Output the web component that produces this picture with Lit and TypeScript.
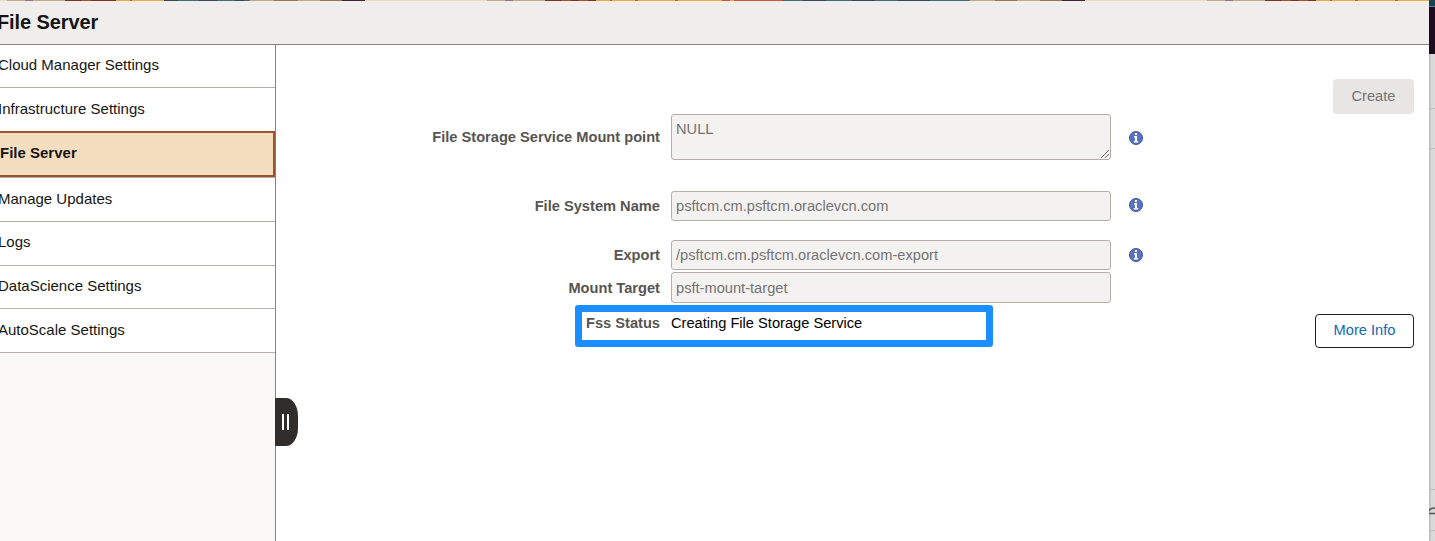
import { LitElement, html, css, svg } from "lit";
import { customElement, property } from "lit/decorators.js";

@customElement("info-icon")
class InfoIcon extends LitElement {
  static styles = css`
    :host { display: block; width: 14px; height: 14px; }
    svg { display: block; }
  `;
  render() {
    return html`<svg width="14" height="14" viewBox="0 0 14 14">
      ${svg`<circle cx="7" cy="7" r="6.5" fill="#5b72c0" stroke="#3c55a0" stroke-width="1"/>
      <path d="M6 2h2v2H6zM5 5h3v5h1.200v1.500H4.800V10H6V6.400H5z" fill="#fff"/>`}
    </svg>`;
  }
}

@customElement("nav-list")
class NavList extends LitElement {
  @property({ type: Array }) items: string[] = [];
  @property() current = "";
  static styles = css`
    :host { display: block; }
    .item {
      box-sizing: border-box; height: 44px; border-bottom: 1px solid #b5afa8;
      background: #fff; line-height: 42px; color: #161513; white-space: nowrap;
    }
    .item:nth-child(1), .item:nth-child(6) { height: 43px; line-height: 40px; }
    .item:nth-child(5) { line-height: 40px; }
    .label { display: block; margin-left: -2px; }
    .item.current {
      height: 46px; margin-top: -1px; border: 2px solid #9c522f; border-left: 0;
      background: #f5debf; font-weight: bold; line-height: 40px;
      box-shadow: 0 1px 0 #b5afa8; margin-bottom: 1px;
    }
    .current .label { margin-left: 0; }
  `;
  render() {
    return this.items.map(
      (t) => html`<div class="item ${t === this.current ? "current" : ""}"><span class="label">${t}</span></div>`
    );
  }
}

@customElement("app-root")
class AppRoot extends LitElement {
  static styles = css`
    :host {
      display: flex; width: 1435px; height: 541px; overflow: hidden; background: #fff;
      font-family: "Liberation Sans", Arial, sans-serif; font-size: 15px; color: #161513;
    }
    .modal { width: 1429px; display: flex; flex-direction: column; flex: none; }
    .banner {
      height: 1px; flex: none;
      background: repeating-linear-gradient(90deg,
        #e9ddbb 0 7px, #c6a780 7px 25px, #8c7c80 25px 33px, #c6a780 33px 65px,
        #7f3322 65px 81px, #a34c28 81px 91px, #7f3322 91px 99px, #a34c28 99px 108px, #7f3322 108px 116px,
        #f3ab41 116px 130px, #b8622c 130px 132px, #f3ab41 132px 155px, #b8622c 155px 158px, #f3ab41 158px 195px,
        #b8622c 195px 198px, #f3ab41 198px 242px, #d94f3c 242px 250px, #f3ab41 250px 254px, #d94f3c 254px 303px,
        #3f6b75 303px 323px, #364a58 323px 346px, #3f6b75 346px 372px, #364a58 372px 395px, #3f6b75 395px 418px,
        #364a58 418px 450px, #3f6b75 450px 490px, #c6a780 490px 515px, #9b7650 515px 537px, #c6a780 537px 560px,
        #9b7650 560px 582px, #442531 582px 605px, #e9ddbb 605px 720px);
    }
    .banner.start {
      width: 480px;
      background: linear-gradient(90deg,
        #e9ddbb 0 7px, #c6a780 7px 25px, #8c7c80 25px 33px, #c6a780 33px 65px,
        #7f3322 65px 81px, #a34c28 81px 91px, #7f3322 91px 116px, #f3ab41 116px 130px, #b8622c 130px 132px,
        #f3ab41 132px 164px, #364a58 164px 178px, #3f6b75 178px 199px, #364a58 199px 217px, #3f6b75 217px 235px,
        #364a58 235px 244px, #3f6b75 244px 250px, #c6a780 250px 274px, #9b7650 274px 298px, #c6a780 298px 320px,
        #9b7650 320px 342px, #442531 342px 365px, #e9ddbb 365px 480px);
    }
    .strip { display: flex; height: 1px; flex: none; }
    .strip .rest { flex: 1; }
    .title {
      box-sizing: border-box; height: 44px; flex: none; background: #f0eeec; border-bottom: 1px solid #858280;
      font-size: 20px; font-weight: bold; line-height: 42px; white-space: nowrap;
    }
    .title span { display: block; margin-left: -3px; letter-spacing: -0.1px; }
    .body { display: flex; flex: 1; min-height: 0; }
    .side { box-sizing: border-box; width: 276px; flex: none; background: #faf9f7; border-right: 1px solid #858280; position: relative; }
    .grip {
      position: absolute; left: 275px; top: 353px; width: 23px; height: 48px; z-index: 1; box-sizing: border-box;
      border-radius: 0 12px 12px 0 / 0 18px 18px 0; background: #312d2a;
      display: flex; align-items: center; gap: 3px; padding-left: 7px;
    }
    .grip i { width: 2px; height: 16px; background: #fff; }
    .main { flex: 1; display: flex; background: #fff; position: relative; }
    .form { width: 867px; flex: none; padding-top: 69px; font-size: 14.65px; }
    .row { display: grid; grid-template-columns: 384px 451px 32px; align-items: center; }
    .row info-icon { margin-left: 18px; }
    .row.mount { margin-bottom: 31px; }
    .row.mount info-icon { margin-top: 2px; }
    .row.fsn { margin-bottom: 19px; }
    .row.fsn info-icon { margin-bottom: 2px; }
    .row.export { margin-bottom: 2px; }
    .row.status { height: 40px; }
    label { font-weight: bold; color: #575553; text-align: right; white-space: nowrap; line-height: 18px; }
    .field {
      box-sizing: border-box; height: 30px; border: 1px solid #b5afa8; border-radius: 3px; background: #f4f2f1;
      color: #757371; line-height: 28px; padding-left: 4px; white-space: nowrap; margin-left: 11px; width: 440px;
    }
    .field.area { height: 46px; display: flex; justify-content: space-between; align-items: flex-end; }
    .area span { align-self: flex-start; }
    .field.tall { height: 31px; line-height: 30px; }
    .value { color: #000; margin-left: 11px; white-space: nowrap; line-height: 18px; }
    .mark {
      position: absolute; left: 299px; top: 260px; box-sizing: border-box; width: 418px; height: 42px;
      border: 7px solid #1b8fff; border-radius: 3px;
    }
    .actions { flex: 1; display: flex; flex-direction: column; align-items: flex-end; padding: 34px 15px 0 0; font-size: 14.65px; }
    .btn { box-sizing: border-box; border-radius: 4px; text-align: center; white-space: nowrap; }
    .create { width: 81px; height: 35px; line-height: 34px; background: #e7e6e4; color: #757371; margin-bottom: 200px; }
    .more { width: 99px; height: 34px; line-height: 30px; border: 1px solid #201e1c; color: #0f69ad; background: #fff; }
    .edge { flex: 1; display: flex; flex-direction: column; }
    .teal { height: 6px; background: #164650; border-bottom: 1px solid #77777b; }
    .purple { height: 47px; background: #1d0c20; }
    .page { flex: 1; background: linear-gradient(90deg, #bdbdbd 0 1px, #d6d6d6 2px, #dcdcdc 6px); }
    .page svg { display: block; }
  `;

  render() {
    const items = [
      "Cloud Manager Settings", "Infrastructure Settings", "File Server", "Manage Updates",
      "Logs", "DataScience Settings", "AutoScale Settings",
    ];
    return html`
      <div class="modal">
        <div class="strip"><div class="banner start"></div><div class="banner rest"></div></div>
        <div class="title"><span>File Server</span></div>
        <div class="body">
          <div class="side">
            <nav-list .items=${items} current="File Server"></nav-list>
            <div class="grip"><i></i><i></i></div>
          </div>
          <div class="main">
            <div class="form">
              <div class="row mount">
                <label>File Storage Service Mount point</label>
                <div class="field area"><span>NULL</span>
                  <svg width="10" height="10" viewBox="0 0 10 10"><path d="M1 9l8-8M5 9l4-4" stroke="#555" stroke-width=".8"/></svg>
                </div>
                <info-icon></info-icon>
              </div>
              <div class="row fsn">
                <label>File System Name</label>
                <div class="field">psftcm.cm.psftcm.oraclevcn.com</div>
                <info-icon></info-icon>
              </div>
              <div class="row export">
                <label>Export</label>
                <div class="field">/psftcm.cm.psftcm.oraclevcn.com-export</div>
                <info-icon></info-icon>
              </div>
              <div class="row">
                <label>Mount Target</label>
                <div class="field tall">psft-mount-target</div>
              </div>
              <div class="row status">
                <label>Fss Status</label>
                <div class="value">Creating File Storage Service</div>
              </div>
            </div>
            <div class="mark"></div>
            <div class="actions">
              <div class="btn create">Create</div>
              <div class="btn more">More Info</div>
            </div>
          </div>
        </div>
      </div>
      <div class="edge">
        <div class="teal"></div>
        <div class="purple"></div>
        <div class="page">
          <svg width="6" height="487" viewBox="0 0 6 487">
            <path d="M0 54.5h6M0 94.5h6M0 435.5h6M0 476.5h6" stroke="#bcbcbc" />
            <path d="M0 457q1-3 6-3M0 459.500h6" fill="none" stroke="#555" stroke-width="1.4" />
          </svg>
        </div>
      </div>
    `;
  }
}
